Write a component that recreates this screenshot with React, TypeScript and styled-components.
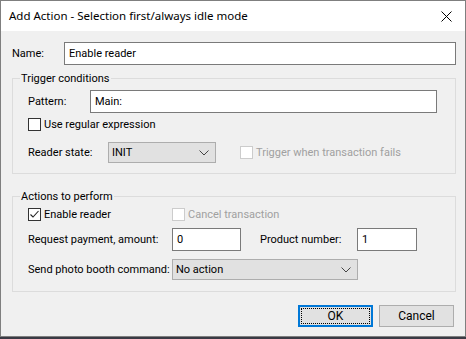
import React from "react";
import styled, { createGlobalStyle } from "styled-components";

const Global = createGlobalStyle`
  html, body { margin: 0; padding: 0; background: #3a3a44; }
  body { font-family: Roboto, "Noto Sans", sans-serif; font-size: 11px; color: #000; }
  * { box-sizing: border-box; }
`;

const Window = styled.div`
  width: 466px;
  height: 337px;
  border: 1px solid #7f7f7f;
  display: flex;
  flex-direction: column;
  background: #f0f0f0;
`;

const TitleBar = styled.div`
  height: 30px;
  background: #fff;
  display: flex;
  align-items: center;
  justify-content: space-between;
  padding: 0 9px 0 8px;
`;

const Title = styled.div`
  font-family: "Noto Sans", sans-serif;
  font-size: 11.5px;
  line-height: 16px;
`;

const Close = styled.div`
  width: 12px;
  height: 12px;
  display: flex;
  align-items: center;
  justify-content: center;
  margin-right: 4px;
`;

const Content = styled.div`
  flex: 1;
  display: flex;
  flex-direction: column;
  padding: 11px 9px 0 11px;
`;

const Row = styled.div<{ $mt?: number }>`
  display: flex;
  align-items: center;
  margin-top: ${(p) => p.$mt ?? 0}px;
`;

const Label = styled.span<{ $w?: number; $ml?: number; $disabled?: boolean }>`
  display: inline-block;
  width: ${(p) => (p.$w ? `${p.$w}px` : "auto")};
  margin-left: ${(p) => p.$ml ?? 0}px;
  color: ${(p) => (p.$disabled ? "#a0a0a0" : "#000")};
  line-height: 16px;
  white-space: nowrap;
`;

const TextInput = styled.div<{ $w?: number }>`
  width: ${(p) => (p.$w ? `${p.$w}px` : "auto")};
  flex: ${(p) => (p.$w ? "none" : 1)};
  height: 23px;
  border: 1px solid #7a7a7a;
  background: #fff;
  padding: 0 4px;
  display: flex;
  align-items: center;
  line-height: 16px;
`;

const Combo = styled.div<{ $w: number }>`
  width: ${(p) => p.$w}px;
  height: 21px;
  border: 1px solid #adadad;
  background: #e1e1e1;
  padding: 0 6px 0 3px;
  display: flex;
  align-items: center;
  justify-content: space-between;
  line-height: 16px;
`;

const Group = styled.div<{ $mt: number; $pb: number }>`
  margin-top: ${(p) => p.$mt}px;
  border: 1px solid #dcdcdc;
  padding: 0 10px ${(p) => p.$pb}px 15px;
  display: flex;
  flex-direction: column;
`;

const Legend = styled.div`
  align-self: flex-start;
  margin: -8px 0 0 -8px;
  padding: 0 1px;
  background: #f0f0f0;
  line-height: 16px;
`;

const CheckWrap = styled.label<{ $ml?: number; $w?: number }>`
  display: inline-flex;
  align-items: center;
  margin-left: ${(p) => p.$ml ?? 0}px;
  width: ${(p) => (p.$w ? `${p.$w}px` : "auto")};
  height: 13px;
`;

const Box = styled.span<{ $disabled?: boolean }>`
  width: 13px;
  height: 13px;
  flex: none;
  border: 1px solid ${(p) => (p.$disabled ? "#cccccc" : "#333333")};
  background: #fff;
  display: inline-flex;
  align-items: center;
  justify-content: center;
  margin-right: 3px;
`;

const Buttons = styled.div`
  display: flex;
  justify-content: flex-end;
  gap: 6px;
  margin-top: 13px;
  padding-right: 2px;
`;

const Button = styled.div<{ $default?: boolean }>`
  width: 75px;
  height: 22px;
  background: #e1e1e1;
  border: ${(p) => (p.$default ? "2px solid #0078d7" : "1px solid #adadad")};
  display: flex;
  align-items: center;
  justify-content: center;
  padding: ${(p) => (p.$default ? "1px" : "2px")};
  line-height: 16px;
  font-size: 12px;
`;

const Focus = styled.div`
  width: 100%;
  height: 100%;
  border: 1px dotted #000;
  display: flex;
  align-items: center;
  justify-content: center;
`;

const Plain = styled.div`
  width: 100%;
  height: 100%;
  display: flex;
  align-items: center;
  justify-content: center;
`;

const Chevron = () => (
  <svg width="10" height="6" viewBox="0 0 10 6">
    <path d="M0.5 0.5 L5 5 L9.5 0.5" fill="none" stroke="#444" strokeWidth="1" />
  </svg>
);

const Checkbox = ({
  checked,
  disabled,
  label,
  ml,
  w,
}: {
  checked?: boolean;
  disabled?: boolean;
  label: string;
  ml?: number;
  w?: number;
}) => (
  <CheckWrap $ml={ml} $w={w}>
    <Box $disabled={disabled}>
      {checked && (
        <svg width="11" height="11" viewBox="0 0 11 11">
          <path d="M1.5 5.5 L4 8 L9.5 2" fill="none" stroke="#222" strokeWidth="1.1" />
        </svg>
      )}
    </Box>
    <Label $disabled={disabled}>{label}</Label>
  </CheckWrap>
);

export default function App() {
  return (
    <>
      <Global />
      <Window>
        <TitleBar>
          <Title>Add Action - Selection first/always idle mode</Title>
          <Close>
            <svg width="11" height="11" viewBox="0 0 11 11">
              <path d="M0.5 0.5 L10.5 10.5 M10.5 0.5 L0.5 10.5" stroke="#000" strokeWidth="1" />
            </svg>
          </Close>
        </TitleBar>
        <Content>
          <Row>
            <Label $w={52}>Name:</Label>
            <TextInput>Enable reader</TextInput>
          </Row>

          <Group $mt={13} $pb={10}>
            <Legend>Trigger conditions</Legend>
            <Row $mt={3}>
              <Label $w={62}>Pattern:</Label>
              <TextInput $w={347}>Main:</TextInput>
            </Row>
            <Row $mt={5}>
              <Checkbox label="Use regular expression" />
            </Row>
            <Row $mt={11}>
              <Label $w={80}>Reader state:</Label>
              <Combo $w={108}>
                <span>INIT</span>
                <Chevron />
              </Combo>
              <Checkbox disabled label="Trigger when transaction fails" ml={24} />
            </Row>
          </Group>

          <Group $mt={22} $pb={11}>
            <Legend>Actions to perform</Legend>
            <Row $mt={3}>
              <Checkbox checked label="Enable reader" w={144} />
              <Checkbox disabled label="Cancel transaction" />
            </Row>
            <Row $mt={7}>
              <Label $w={144}>Request payment, amount:</Label>
              <TextInput $w={69}>0</TextInput>
              <Label $w={97} $ml={19}>Product number:</Label>
              <TextInput $w={60}>1</TextInput>
            </Row>
            <Row $mt={8}>
              <Label $w={144}>Send photo booth command:</Label>
              <Combo $w={186}>
                <span>No action</span>
                <Chevron />
              </Combo>
            </Row>
          </Group>

          <Buttons>
            <Button $default>
              <Focus>OK</Focus>
            </Button>
            <Button>
              <Plain>Cancel</Plain>
            </Button>
          </Buttons>
        </Content>
      </Window>
    </>
  );
}
